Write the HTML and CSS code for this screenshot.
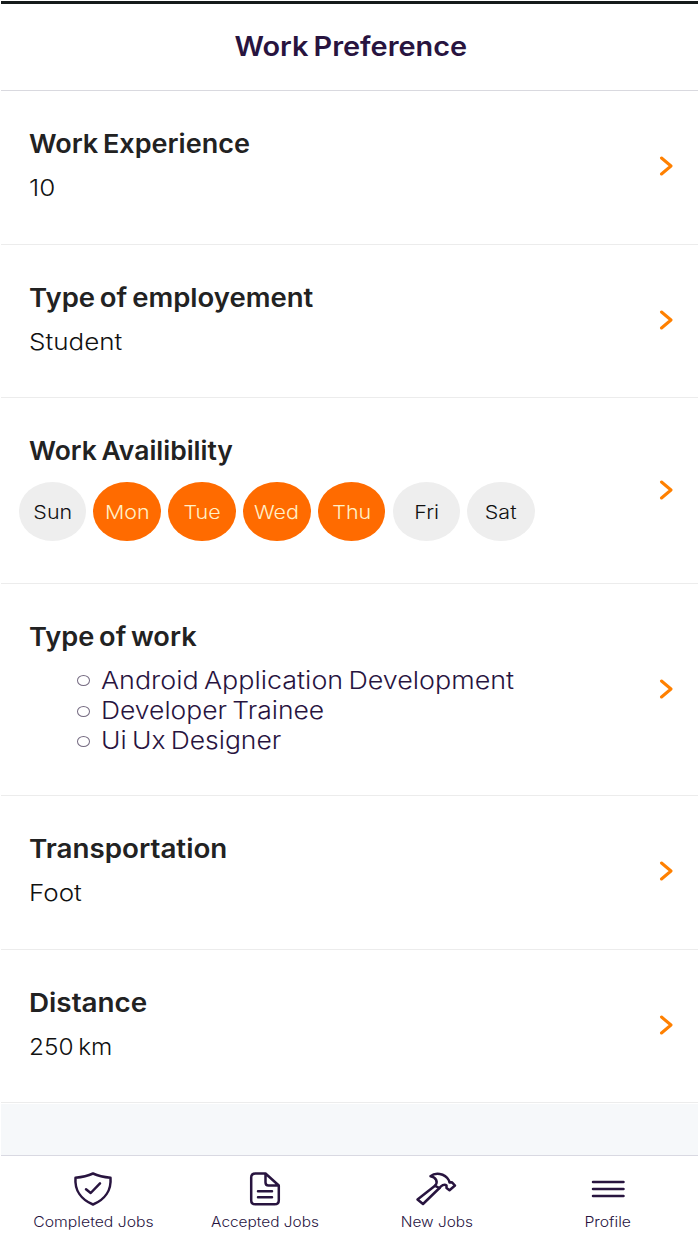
FILE: index.html
```html
<!DOCTYPE html>
<html lang="en">
<head>
    <meta charset="UTF-8">
    <meta name="viewport" content="width=device-width, initial-scale=1.0">
    <title>Work Preference</title>
    <link rel="stylesheet" href="styles.css">
</head>
<body>
    <header class="header">
        <h1>Work Preference</h1>
    </header>

    <main>
        <section class="row">
            <div class="info">
                <h2 class="t-exp">Work Experience</h2>
                <p>10</p>
            </div>
            <svg class="arrow" viewBox="0 0 14 20"><path d="M2.500 2l9.500 8L2.500 18"/></svg>
        </section>

        <section class="row">
            <div class="info">
                <h2 class="t-emp">Type of employement</h2>
                <p>Student</p>
            </div>
            <svg class="arrow" viewBox="0 0 14 20"><path d="M2.500 2l9.500 8L2.500 18"/></svg>
        </section>

        <section class="row row-days">
            <div class="info">
                <h2 class="t-avail">Work Availibility</h2>
                <div class="days">
                    <span class="day"><b>Sun</b></span>
                    <span class="day active"><b>Mon</b></span>
                    <span class="day active"><b>Tue</b></span>
                    <span class="day active"><b>Wed</b></span>
                    <span class="day active"><b>Thu</b></span>
                    <span class="day"><b>Fri</b></span>
                    <span class="day"><b>Sat</b></span>
                </div>
            </div>
            <svg class="arrow" viewBox="0 0 14 20"><path d="M2.500 2l9.500 8L2.500 18"/></svg>
        </section>

        <section class="row row-work">
            <div class="info">
                <h2 class="t-work">Type of work</h2>
                <ul class="works">
                    <li><span>Android Application Development</span></li>
                    <li><span class="w-short">Developer Trainee</span></li>
                    <li><span class="w-short">Ui Ux Designer</span></li>
                </ul>
            </div>
            <svg class="arrow" viewBox="0 0 14 20"><path d="M2.500 2l9.500 8L2.500 18"/></svg>
        </section>

        <section class="row">
            <div class="info">
                <h2 class="t-trans">Transportation</h2>
                <p>Foot</p>
            </div>
            <svg class="arrow" viewBox="0 0 14 20"><path d="M2.500 2l9.500 8L2.500 18"/></svg>
        </section>

        <section class="row">
            <div class="info">
                <h2 class="t-dist">Distance</h2>
                <p class="v-dist">250 km</p>
            </div>
            <svg class="arrow" viewBox="0 0 14 20"><path d="M2.500 2l9.500 8L2.500 18"/></svg>
        </section>
    </main>

    <nav class="tabs">
        <a class="tab">
            <svg width="42" height="36" viewBox="0 0 42 36">
                <path d="M21 2.500C15.500 5 9.500 6.200 3.500 6.800C2.500 19 9 28.500 21 33.500C33 28.500 39.500 19 38.500 6.800C32.500 6.200 26.500 5 21 2.500Z"/>
                <path d="M14 18.200l4.700 3.800L28 12.300"/>
            </svg>
            <span>Completed Jobs</span>
        </a>
        <a class="tab">
            <svg width="42" height="36" viewBox="0 0 42 36">
                <path d="M21.500 2.500H11.500Q7.200 2.500 7.200 6.500V29.500Q7.200 33.300 11.500 33.300H30.500Q34.800 33.300 34.800 29.500V14.500L21.500 2.500V11.500Q21.500 14.500 24.500 14.500H34.800"/>
                <path d="M14 20.300H28M14 26.300H28"/>
            </svg>
            <span class="l-short">Accepted Jobs</span>
        </a>
        <a class="tab">
            <svg width="42" height="36" viewBox="0 0 42 36">
                <path d="M15.500 5.200C20 1.500 29.500 1.700 34 9.500L34.500 11.500L37 11.300L40 14.500L34.500 19.200L31.500 17V14.500C29.500 12.500 26 14.500 24.500 17L8 33L2.500 28.500L20 14.800C23.500 11 21 6 15.500 5.200Z"/>
                <path d="M20 14.800L24.500 17"/>
            </svg>
            <span class="l-short">New Jobs</span>
        </a>
        <a class="tab">
            <svg width="42" height="36" viewBox="0 0 42 36">
                <path d="M6 11H36.500M6 18H36.500M6 25H36.500"/>
            </svg>
            <span>Profile</span>
        </a>
    </nav>
</body>
</html>
```

FILE: styles.css
```css
* {
    box-sizing: border-box;
}
body {
    margin: 0;
    padding: 1px 2px 0 1px;
    height: 1244px;
    overflow: hidden;
    font-family: Inter, "Noto Sans", sans-serif;
    background: #fff;
    color: #111;
}
h1, h2, p, ul {
    margin: 0;
    padding: 0;
}
.header {
    height: 90px;
    border-top: 3px solid #161b1b;
    border-bottom: 1px solid #d9d9df;
    display: flex;
    justify-content: center;
    padding: 25px 0 0 3px;
}
h1 {
    font-size: 27px;
    line-height: 36px;
    font-weight: 600;
    word-spacing: -2px;
    color: #28143f;
    transform: scaleX(1.07);
}
.row {
    height: 153.600px;
    padding: 35px 25px 0 28px;
    border-bottom: 1px solid #ececec;
    display: flex;
    justify-content: space-between;
}
.row-days {
    height: 186px;
}
.row-work {
    height: 212px;
}
/* texts are stretched a little to look wider */
h2 {
    font-size: 26px;
    line-height: 36px;
    font-weight: 600;
    word-spacing: -2px;
    color: #222;
    width: max-content;
    transform-origin: left;
}
.t-exp {
    transform: scaleX(1.04);
}
.t-emp {
    transform: scaleX(1.058);
}
.t-avail {
    transform: scaleX(1.018);
}
.t-work {
    transform: scaleX(1.046);
}
.t-trans {
    transform: scaleX(1.068);
}
.t-dist {
    transform: scaleX(1.07);
}
p {
    font-size: 23px;
    line-height: 30px;
    font-weight: 300;
    margin-top: 11px;
    width: max-content;
    transform-origin: left;
    transform: scaleX(1.13);
}
.v-dist {
    word-spacing: -2px;
    transform: scaleX(1.06);
}
.arrow {
    width: 14px;
    height: 20px;
    align-self: center;
    margin-top: -37px;
}
.arrow path {
    fill: none;
    stroke: #ff8000;
    stroke-width: 3;
    stroke-linecap: round;
    stroke-linejoin: round;
}
.days {
    display: flex;
    gap: 7.300px;
    margin: 13px 0 0 -10.400px;
}
.day {
    width: 67.500px;
    height: 59px;
    border-radius: 50%;
    background: #eee;
    display: flex;
    align-items: center;
    justify-content: center;
    font-size: 18.500px;
}
.day b {
    font-weight: 300;
    transform: scaleX(1.16);
}
.active {
    background: #ff6b00;
    color: #fff0c8;
}
.works {
    list-style: none;
    margin: 10.500px 0 0 48px;
    font-size: 24px;
    line-height: 30.300px;
    font-weight: 300;
    word-spacing: -2px;
    color: #28143f;
}
.works li {
    display: flex;
    align-items: center;
    gap: 11px;
}
.works li::before {
    content: "";
    width: 11px;
    height: 9px;
    border: 1px solid #746a80;
    border-radius: 50%;
}
.works span {
    transform: scaleX(1.12);
    transform-origin: left;
    white-space: nowrap;
}
.works .w-short {
    transform: scaleX(1.103);
}
main {
    height: 1064px;
    background: linear-gradient(#fff 1013px, #f6f8fa 1013px);
}
.tabs {
    height: 89px;
    border-top: 1px solid #d9d9e2;
    display: grid;
    grid-template-columns: repeat(4, 171.500px);
    padding: 15px 0 0 6.700px;
}
.tab {
    display: flex;
    flex-direction: column;
    align-items: center;
}
.tab svg {
    fill: none;
    stroke: #28143f;
    stroke-width: 2.500;
    stroke-linecap: round;
    stroke-linejoin: round;
}
.tab span {
    font-size: 14px;
    line-height: 20px;
    margin-top: 5px;
    font-weight: 300;
    color: #28143f;
    transform: scaleX(1.125);
}
.tab .l-short {
    transform: scaleX(1.1);
}
```
